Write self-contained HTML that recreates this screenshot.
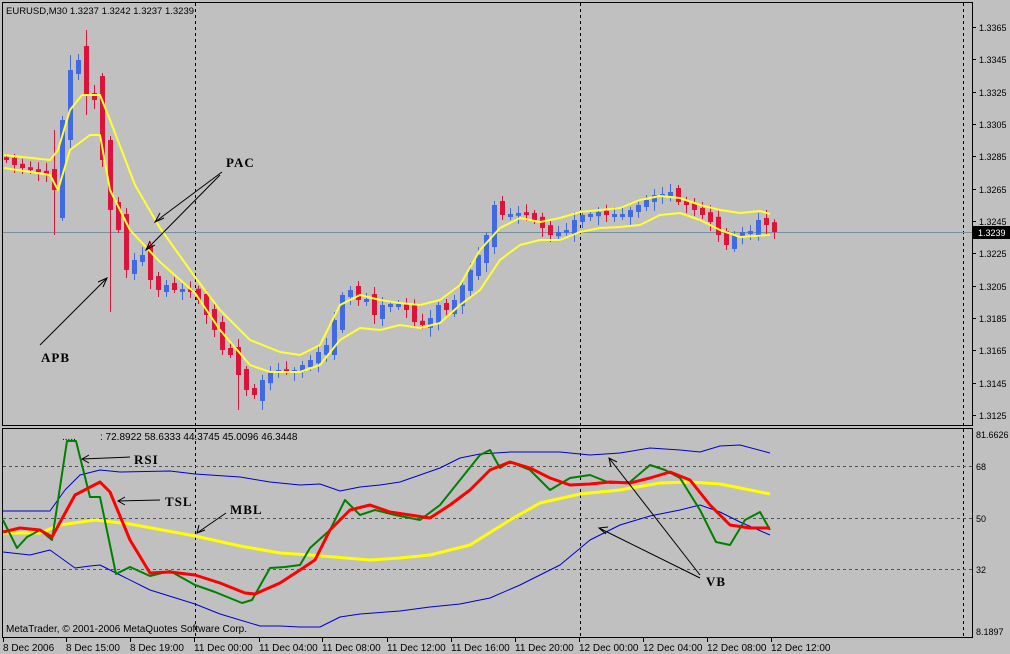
<!DOCTYPE html>
<html><head><meta charset="utf-8"><style>
html,body{margin:0;padding:0;background:#c0c0c0;width:1010px;height:654px;overflow:hidden}
svg{display:block}
text{font-family:"Liberation Sans",sans-serif;font-size:10px;fill:#000}
.b{font-family:"Liberation Serif",serif;font-weight:bold;font-size:13px;letter-spacing:1px}
.p{font-size:9px}
</style></head><body>
<svg id="s" width="1010" height="654" viewBox="0 0 1010 654" xmlns="http://www.w3.org/2000/svg">
<rect width="1010" height="654" fill="#c0c0c0"/>
<rect x="2.5" y="2.5" width="970" height="423" fill="none" stroke="#000"/>
<rect x="2.5" y="428.5" width="970" height="209" fill="none" stroke="#000"/>
<g stroke="#000" stroke-dasharray="3,3" fill="none">
<line x1="195.5" y1="3" x2="195.5" y2="637"/>
<line x1="580.5" y1="3" x2="580.5" y2="637"/>
<line x1="963.5" y1="3" x2="963.5" y2="637"/>
</g>
<g stroke="#555" stroke-dasharray="3,3">
<line x1="3" y1="466.5" x2="972" y2="466.5"/>
<line x1="3" y1="518.5" x2="972" y2="518.5"/>
<line x1="3" y1="569.5" x2="972" y2="569.5"/>
</g>
<line x1="3" y1="232.5" x2="972" y2="232.5" stroke="#7890a0"/>
<g id="c"></g>
<g fill="none" stroke-linejoin="round">
<polyline stroke="#ffff33" stroke-width="2" points="4,155 50,160 58,150 70,110 82,95 100,95 110,120 135,185 160,228 195,277 220,310 250,340 280,352 300,355 320,345 340,305 360,295 380,300 400,303 420,305 440,300 460,285 480,250 500,228 520,218 540,222 560,218 580,212 600,210 620,208 640,200 660,196 680,198 700,205 720,210 740,213 760,211 770,214"/>
<polyline stroke="#ffff33" stroke-width="2" points="4,168 50,175 58,190 70,150 90,135 100,135 110,190 130,230 160,262 195,293 220,330 250,365 270,372 300,372 320,365 340,340 360,328 380,330 400,325 420,328 440,323 460,305 480,290 500,260 520,245 540,240 560,240 580,232 600,228 620,227 640,225 660,215 680,213 700,220 720,230 740,237 770,235"/>
<polyline stroke="#0000cc" stroke-width="1" points="3,511 30,511 50,511 65,490 80,475 100,470 120,472 170,471 195,474 240,477 270,482 300,485 320,484 340,491 360,487 380,485 400,482 420,475 440,468 460,458 480,454 510,452 530,452 560,452 590,455 620,453 650,448 680,450 700,452 720,446 740,445 770,453"/>
<polyline stroke="#0000cc" stroke-width="1" points="3,552 30,555 50,550 75,568 90,566 100,565 120,575 150,590 195,604 220,614 260,626 280,626 300,627 320,627 340,617 360,614 400,611 430,607 460,604 490,598 520,585 560,565 590,540 620,525 650,516 680,510 700,505 720,512 740,522 770,535"/>
<polyline stroke="#ffff00" stroke-width="3" points="3,533 40,533 60,525 95,520 130,524 195,536 240,546 280,553 310,555 370,560 400,558 430,555 470,545 510,520 540,503 580,494 620,490 660,483 690,482 720,484 750,490 770,494"/>
<polyline stroke="#008000" stroke-width="2" points="3,520 17,548 27,537 40,530 52,540 67,441 76,441 90,497 100,497 116,574 130,567 150,576 170,571 195,585 215,592 242,603 252,600 270,568 285,567 300,565 310,548 330,530 345,500 360,515 375,510 395,515 420,520 440,505 460,480 480,455 490,450 500,468 510,462 530,470 550,490 570,478 590,475 610,483 630,482 650,465 665,470 680,478 700,510 716,542 730,545 745,520 760,512 770,530"/>
<polyline stroke="#ff0000" stroke-width="3" points="3,532 20,528 40,530 52,537 75,495 100,482 110,492 130,540 150,573 170,572 195,575 220,583 245,593 255,594 280,583 300,570 315,560 330,530 350,510 370,505 390,512 410,515 430,518 450,505 470,490 490,470 510,462 530,468 550,478 570,485 590,484 610,482 630,483 650,478 670,472 690,480 710,505 730,525 750,528 770,528"/>
</g>
<g stroke="#000" fill="none" stroke-width="1">
<line x1="222" y1="172" x2="155" y2="222"/><polyline points="160,213 155,222 164,218"/>
<line x1="220" y1="175" x2="146" y2="250"/><polyline points="150,241 146,250 155,245"/>
<line x1="40" y1="345" x2="107" y2="278"/><polyline points="98,282 107,278 103,287"/>
<line x1="130" y1="457" x2="82" y2="459"/><polyline points="89,455 82,459 89,463"/>
<line x1="160" y1="500" x2="118" y2="501"/><polyline points="125,497 118,501 125,505"/>
<line x1="226" y1="513" x2="197" y2="533"/><polyline points="199,525 197,533 205,530"/>
<line x1="700" y1="575" x2="609" y2="458"/><polyline points="611,467 609,458 617,462"/>
<line x1="700" y1="578" x2="599" y2="528"/><polyline points="606,534 599,528 608,527"/>
</g>
<text class="b" x="226" y="167">PAC</text>
<text class="b" x="41" y="362">APB</text>
<text class="b" x="134" y="464">RSI</text>
<text class="b" x="165" y="506">TSL</text>
<text class="b" x="230" y="514">MBL</text>
<text class="b" x="706" y="586">VB</text>
<text x="6" y="14" style="font-size:9.5px">EURUSD,M30  1.3237 1.3242 1.3237 1.3239</text>
<text x="100" y="440" font-size="9">: 72.8922 58.6333 44.3745 45.0096 46.3448</text>
<text x="62" y="440" font-size="9">.....</text>
<text x="6" y="632">MetaTrader, © 2001-2006 MetaQuotes Software Corp.</text>
<g id="ax"></g>
<rect x="973" y="226" width="37" height="13" fill="#000"/>
<text x="978" y="236" class="p" style="fill:#fff">1.3239</text>
<g>
<text class="p" x="976" y="438">81.6626</text>
<text class="p" x="976" y="470">68</text>
<text class="p" x="976" y="522">50</text>
<text class="p" x="976" y="573">32</text>
<text class="p" x="976" y="635">8.1897</text>
</g>
<g>
<text class="p" x="979" y="31">1.3365</text><text class="p" x="979" y="63">1.3345</text><text class="p" x="979" y="96">1.3325</text><text class="p" x="979" y="128">1.3305</text><text class="p" x="979" y="160">1.3285</text><text class="p" x="979" y="193">1.3265</text><text class="p" x="979" y="225">1.3245</text><text class="p" x="979" y="257">1.3225</text><text class="p" x="979" y="290">1.3205</text><text class="p" x="979" y="322">1.3185</text><text class="p" x="979" y="354">1.3165</text><text class="p" x="979" y="387">1.3145</text><text class="p" x="979" y="419">1.3125</text>
</g>
<g>
<text x="3" y="651">8 Dec 2006</text><text x="66" y="651">8 Dec 15:00</text><text x="130" y="651">8 Dec 19:00</text><text x="194" y="651">11 Dec 00:00</text><text x="259" y="651">11 Dec 04:00</text><text x="322" y="651">11 Dec 08:00</text><text x="387" y="651">11 Dec 12:00</text><text x="451" y="651">11 Dec 16:00</text><text x="515" y="651">11 Dec 20:00</text><text x="579" y="651">12 Dec 00:00</text><text x="643" y="651">12 Dec 04:00</text><text x="707" y="651">12 Dec 08:00</text><text x="771" y="651">12 Dec 12:00</text>
</g>
</svg>
<script>
var ns="http://www.w3.org/2000/svg",g=document.getElementById("c"),ax=document.getElementById("ax");
function el(p,t,a){var e=document.createElementNS(ns,t);for(var k in a)e.setAttribute(k,a[k]);p.appendChild(e);return e;}
var ys=[160,165,168,170,172,175,190,120,70,60,95,100,160,210,230,270,260,255,280,290,285,290,290,292,300,315,330,350,355,375,390,395,380,372,370,372,370,365,360,352,345,320,295,290,300,300,315,305,305,305,310,322,325,318,305,310,300,285,270,255,235,205,215,215,213,215,220,228,235,232,230,220,215,215,212,215,215,215,210,205,200,195,195,192,202,205,210,215,222,235,245,235,232,232,220,225,232];
var prev=158;
for(var i=0;i<ys.length;i++){var x=6+i*8,c=ys[i],o=prev,d=c-o;
 o=o-d*0.4;
 var t=Math.min(o,c),b=Math.max(o,c);
 var col=c>prev?"#dc143c":"#4169e1";if(b-t<2){t-=1;b=t+3;}
 var hi=t-3-((i*7)%6),lo=b+3+((i*5)%7);
 if(i==6){hi=130;lo=235}if(i==8){hi=55}if(i==10){hi=30;lo=115}if(i==13){lo=312}if(i==29){lo=410}
 el(g,"line",{x1:x+.5,y1:hi,x2:x+.5,y2:lo,stroke:col});
 el(g,"rect",{x:x-2,y:t,width:5,height:b-t,fill:col});prev=c;}
for(var y=27;y<=415;y+=32.33)el(ax,"line",{x1:972,y1:Math.round(y)+.5,x2:976,y2:Math.round(y)+.5,stroke:"#000"});
[3,66,130,194,259,322,387,451,515,579,643,707,771].forEach(function(x){el(ax,"line",{x1:x+.5,y1:637,x2:x+.5,y2:642,stroke:"#000"});});
</script>
</body></html>
